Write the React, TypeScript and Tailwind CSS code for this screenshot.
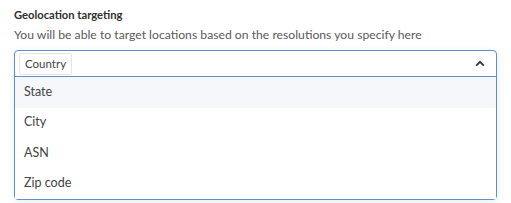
import React from "react";

export default function App() {
  const items = ["State", "City", "ASN", "Zip code"];
  return (
    <div className="w-[511px] h-[203px] bg-white pl-[14px] pr-[14px] pt-[6px] font-['Lato',sans-serif]">
      <div className="text-[11.2px] font-bold text-[#2f2f2f] leading-[17px]">Geolocation targeting</div>
      <div className="text-[12.2px] text-[#5a5a5a] leading-[17px] mt-[3px]">
        You will be able to target locations based on the resolutions you specify here
      </div>
      <div className="mt-[7px] w-[483px] rounded-[4px] border border-[#5b8fd6] shadow-[0_2px_8px_rgba(0,0,0,0.08)]">
        <div className="h-[26px] flex items-center justify-between pl-[4px] pr-[10px] border-b border-[#5b8fd6]">
          <span className="h-[22px] px-[5px] flex items-center border border-[#e5e5e5] rounded-[2px] text-[11.5px] text-[#444]">
            Country
          </span>
          <svg width="10" height="7" viewBox="0 0 10 7" className="mr-[1px]">
            <path d="M1.2 5.6 L5 1.8 L8.8 5.6" fill="none" stroke="#333" strokeWidth="1.8" />
          </svg>
        </div>
        {items.map((it, i) => (
          <div
            key={it}
            className={`h-[30.5px] flex items-center pl-[9px] text-[12.5px] text-[#444] ${i === 0 ? "bg-[#f5f7fa]" : "bg-white"}`}
          >
            {it}
          </div>
        ))}
      </div>
    </div>
  );
}
